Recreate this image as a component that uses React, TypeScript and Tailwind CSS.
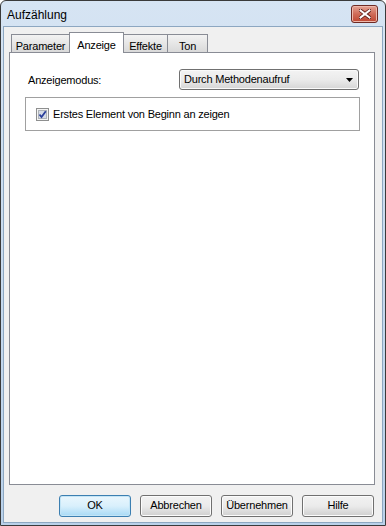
import { ReactNode } from "react"

const TABS = [
  { label: "Parameter", w: "w-[59px]" },
  { label: "Anzeige", w: "w-[55px]" },
  { label: "Effekte", w: "w-[45px]" },
  { label: "Ton", w: "w-[41px]" },
]

function Btn({ children, primary }: { children: ReactNode; primary?: boolean }) {
  return (
    <button
      className={`flex h-[22px] w-[72px] items-center justify-center rounded-[3px] border text-[11px] text-black ${
        primary
          ? "border-[#3c7fb1] bg-gradient-to-b from-[#eaf6fd] via-[#d9f0fc] to-[#a7d9f5] shadow-[inset_0_0_0_1px_#c4e5f6]"
          : "border-[#707070] bg-gradient-to-b from-[#f2f2f2] via-[#ebebeb] to-[#cfcfcf] shadow-[inset_0_0_0_1px_#fcfcfc]"
      }`}
    >
      {children}
    </button>
  )
}

function CloseIcon() {
  return (
    <svg width="12" height="10" viewBox="0 0 12 10">
      <path d="M1.5 1.5 L10.5 8.5 M10.5 1.5 L1.5 8.5" stroke="#5a1a14" strokeWidth="3.6" strokeLinecap="square" />
      <path d="M1.5 1.5 L10.5 8.5 M10.5 1.5 L1.5 8.5" stroke="#ffffff" strokeWidth="2" strokeLinecap="square" />
    </svg>
  )
}

function CheckIcon() {
  return (
    <svg width="13" height="13" viewBox="0 0 13 13">
      <rect x="0.5" y="0.5" width="12" height="12" fill="#f4f4f4" stroke="#8e8f8f" />
      <rect x="2.5" y="2.5" width="8" height="8" fill="#d5dbe6" stroke="#aeb3b9" />
      <path d="M3.5 6.5 L5.5 9 L9.8 3.2" fill="none" stroke="#2a3f9b" strokeWidth="1.8" />
    </svg>
  )
}

export default function App() {
  return (
    <div
      className="flex h-[526px] w-[386px] flex-col rounded-t-[6px] border border-[#3a3a3a] bg-gradient-to-b from-[#d6e4f3] to-[#b9d1ea] text-[11px] tracking-[-0.2px] text-black"
      style={{ fontFamily: '"Liberation Sans", Arial, sans-serif' }}
    >
      {/* title bar */}
      <div className="flex h-[25px] shrink-0 items-start justify-between pl-[6px] pr-[7px]">
        <span className="pt-[7px] text-[12px] leading-[14px] tracking-normal text-black">Aufzählung</span>
        <div className="mt-[4px] flex h-[18px] w-[27px] items-center justify-center rounded-[3px] border border-[#6e2a24] bg-gradient-to-b from-[#e4a294] via-[#cf6b58] to-[#bf4632] shadow-[inset_0_0_0_1px_#eeb8ab]">
          <CloseIcon />
        </div>
      </div>

      {/* client */}
      <div className="mx-[2px] mb-[2px] flex flex-1 flex-col border border-[#8da7c1] bg-[#f0f0f0] pl-[5px] pr-[7px]">
        <div className="mt-[5px] flex h-[20px] items-end pl-[2px]">
          {TABS.map((t, i) =>
            i === 1 ? (
              <div
                key={t.label}
                className={`relative z-10 -mb-px -ml-px flex h-[21px] ${t.w} items-start justify-center border border-b-0 border-[#898c95] bg-white pt-[4px]`}
              >
                {t.label}
              </div>
            ) : (
              <div
                key={t.label}
                className={`${i > 0 ? "-ml-px" : ""} flex h-[18px] ${t.w} items-start justify-center border border-b-0 border-[#898c95] bg-gradient-to-b from-[#f3f3f3] to-[#d9d9d9] pt-[3px]`}
              >
                {t.label}
              </div>
            )
          )}
        </div>

        <div className="flex flex-1 flex-col border border-[#898c95] bg-white pl-[15px] pr-[14px] pt-[16px]">
          <div className="flex items-start justify-between pl-[3px] pr-[1px]">
            <span className="pt-[3px]">Anzeigemodus:</span>
            <div className="flex h-[21px] w-[180px] items-center justify-between rounded-[3px] border border-[#707070] bg-gradient-to-b from-[#f3f3f3] via-[#ebebeb] to-[#d5d5d5] pl-[4px] pr-[5px] shadow-[inset_0_0_0_1px_#fafafa]">
              <span>Durch Methodenaufruf</span>
              <svg width="7" height="4" viewBox="0 0 7 4">
                <path d="M0 0 H7 L3.5 4 Z" fill="#000" />
              </svg>
            </div>
          </div>

          <div className="mt-[7px] flex h-[34px] items-center border border-[#a0a0a0] pl-[10px]">
            <CheckIcon />
            <span className="ml-[4px]">Erstes Element von Beginn an zeigen</span>
          </div>
        </div>

        <div className="flex h-[37px] shrink-0 items-center justify-end gap-[9px] pr-[1px] pt-[4px]">
          <Btn primary>OK</Btn>
          <Btn>Abbrechen</Btn>
          <Btn>Übernehmen</Btn>
          <Btn>Hilfe</Btn>
        </div>
      </div>
    </div>
  )
}
